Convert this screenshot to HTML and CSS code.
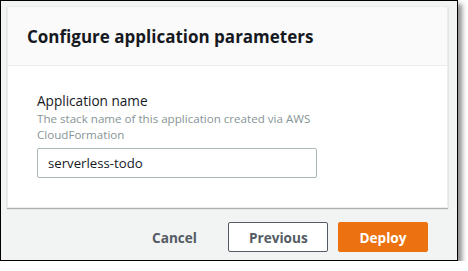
FILE: index.html
```html
<!DOCTYPE html>
<html lang="en">
<head>
    <meta charset="UTF-8">
    <meta name="viewport" content="width=device-width, initial-scale=1.0">
    <title>Configure application parameters</title>
    <link rel="stylesheet" href="styles.css">
</head>
<body>
    <div class="frame">
        <div class="panel">
            <div class="panel-header">
                <h2>Configure application parameters</h2>
            </div>
            <div class="panel-body">
                <label class="field-label" for="appName">Application name</label>
                <p class="field-desc">The stack name of this application created via AWS CloudFormation</p>
                <input type="text" id="appName" value="serverless-todo">
            </div>
        </div>

        <div class="actions">
            <button class="btn btn-link">Cancel</button>
            <button class="btn btn-normal">Previous</button>
            <button class="btn btn-primary">Deploy</button>
        </div>
    </div>
</body>
</html>
```

FILE: styles.css
```css
body {
    font-family: 'Open Sans', 'Liberation Sans', sans-serif;
    margin: 0;
    padding: 0;
    background-color: #fff;
    color: #16191f;
}

.frame {
    box-sizing: border-box;
    width: 458px;
    height: 261px;
    border: 1px solid #000;
    background-color: #f2f3f3;
    padding: 5px 9px 0 6px;
    box-shadow: 4px 4px 5px rgba(0,0,0,0.45);
}

.panel {
    background-color: #fff;
    border: 1px solid #eaeded;
    box-shadow: 0 1px 1px rgba(0,28,36,0.3);
}

.panel-header {
    background-color: #fafafa;
    border-bottom: 1px solid #eaeded;
    height: 58px;
    padding: 0 19px;
    display: flex;
    align-items: center;
}

h2 {
    margin: 0;
    font-size: 17px;
    font-weight: 700;
    color: #16191f;
}

.panel-body {
    padding: 25px 29px 29px;
}

.field-label {
    display: block;
    font-size: 13.6px;
    line-height: 20px;
    color: #16191f;
}

.field-desc {
    margin: 0 0 5px;
    font-size: 11.6px;
    line-height: 16px;
    color: #879596;
    max-width: 282px;
}

input[type="text"] {
    box-sizing: border-box;
    width: 280px;
    height: 30px;
    padding: 0 10px;
    border: 1px solid #aab7b8;
    border-radius: 2px;
    font-family: inherit;
    font-size: 13.2px;
    color: #16191f;
}

.actions {
    display: flex;
    justify-content: flex-end;
    gap: 10px;
    padding: 14px 20px 0 0;
}

.btn {
    box-sizing: border-box;
    height: 30px;
    padding: 0 20px;
    border-radius: 2px;
    font-family: inherit;
    font-size: 13.6px;
    font-weight: 700;
    cursor: pointer;
}

.btn-link {
    background: none;
    border: 1px solid transparent;
    color: #545b64;
}

.btn-normal {
    width: 100px;
    background-color: #fff;
    border: 1px solid #545b64;
    color: #545b64;
}

.btn-primary {
    width: 90px;
    background-color: #ec7211;
    border: 1px solid #ec7211;
    color: #fff;
}
```
